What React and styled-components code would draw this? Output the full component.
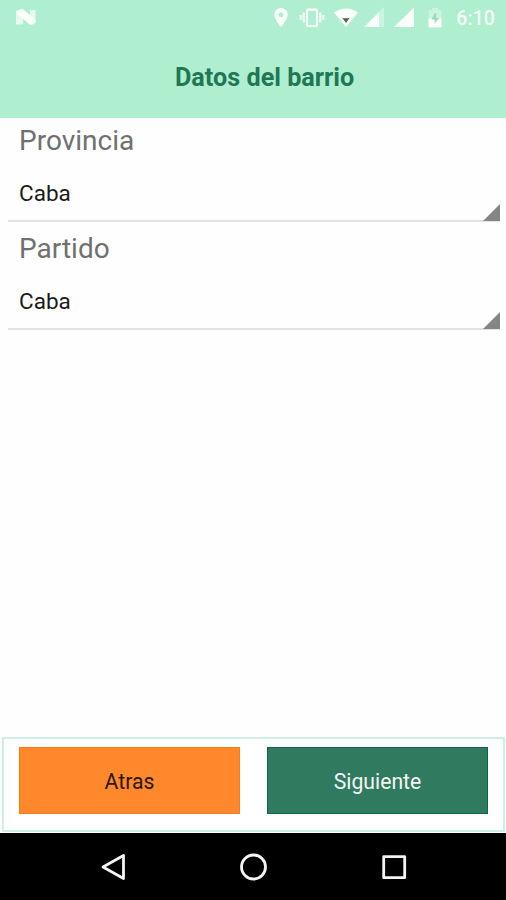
import React from 'react';
import styled, { createGlobalStyle } from 'styled-components';

const GlobalStyle = createGlobalStyle`
  * { box-sizing: border-box; }
  body { margin: 0; background: #fff; }
`;

const Screen = styled.div`
  width: 506px;
  height: 900px;
  display: flex;
  flex-direction: column;
  overflow: hidden;
  background: #fefefe;
  font-family: Roboto, sans-serif;
`;

const Header = styled.header`
  height: 118px;
  flex: none;
  background: #b0eed0;
`;

const StatusBar = styled.div`
  height: 36px;
  display: flex;
  align-items: flex-start;
  padding: 0 11px 0 16px;
`;

const StatusIcon = styled.svg`
  display: block;
  flex: none;
  height: 36px;
  width: ${(p) => p.$width}px;
  margin-left: ${(p) => p.$gap || 0}px;
  fill: #fafffc;
`;

const Clock = styled.time`
  margin-left: auto;
  line-height: 37px;
  font-size: 19.5px;
  font-weight: 500;
  letter-spacing: 0.1px;
  color: #f4fff9;
`;

const Title = styled.h1`
  margin: 0;
  padding: 24px 0 0 175px;
  font-size: 25.2px;
  line-height: 36px;
  font-weight: 700;
  color: #1e7855;
`;

const Form = styled.main`
  flex: 1;
  padding: 0 6px 0 8px;
`;

const Field = styled.section`
  height: 108px;
`;

const Label = styled.div`
  height: 44px;
  padding-left: 11px;
  font-size: 28px;
  line-height: 45px;
  color: #707070;
`;

const Select = styled.div`
  height: 60px;
  display: flex;
  justify-content: space-between;
  align-items: flex-end;
  padding-left: 11px;
  border-bottom: 2px solid #e2e2e2;
`;

const Value = styled.span`
  font-size: 22.5px;
  line-height: 54px;
  color: #1b1b1b;
`;

const Arrow = styled.svg`
  display: block;
  width: 17px;
  height: 17px;
  margin-bottom: -1px;
  fill: #858585;
`;

const Actions = styled.footer`
  flex: none;
  height: 95px;
  margin: 0 1px 1px 2px;
  padding: 8px 14px 0 15px;
  display: flex;
  gap: 27px;
  border: 2px solid #cdf0e2;
  background: #fff;
`;

const Button = styled.button`
  width: 221px;
  height: 67px;
  padding: 2px 0 0;
  border: 1px solid ${(p) => (p.$primary ? '#0c6745' : '#fa7918')};
  background: ${(p) => (p.$primary ? '#307a60' : '#ff882c')};
  color: ${(p) => (p.$primary ? '#f2f7f5' : '#2c1705')};
  font-family: inherit;
  font-size: 21.2px;
`;

const NavBar = styled.nav`
  flex: none;
  height: 67px;
  padding: 0 98px 0 100px;
  display: flex;
  align-items: center;
  justify-content: space-between;
  background: #000;
`;

const NavIcon = styled.svg`
  display: block;
  width: 28px;
  height: 30px;
  fill: none;
  stroke: #f4f4f4;
  stroke-width: 2.8;
  stroke-linejoin: round;
`;

function SelectField({ label, value }) {
  return (
    <Field>
      <Label>{label}</Label>
      <Select>
        <Value>{value}</Value>
        <Arrow viewBox="0 0 17 17"><path d="M17 0V17H0Z" /></Arrow>
      </Select>
    </Field>
  );
}

export default function App() {
  return (
    <Screen>
      <GlobalStyle />
      <Header>
        <StatusBar>
          <StatusIcon $width={20} viewBox="0 0 20 36">
            <path opacity=".72" d="M0 11l5-1.500 2 6V24.500H0zM14 10h5.500v13l-2 1-3.500-4z" />
            <path d="M.5 11L4 9.300Q6 8.500 8 10L19.500 20v3l-4 2q-1.500 0-3-1.500L.5 13z" />
          </StatusIcon>
          <StatusIcon $width={14} $gap={238} viewBox="0 0 14 36">
            <path fillRule="evenodd" d="M7 8C3 8 .3 11 .3 14.800C.3 19.500 7 27 7 27s6.700-7.500 6.700-12.200C13.700 11 11 8 7 8zm0 4.300a2.500 2.500 0 1 1 0 5 2.500 2.500 0 0 1 0-5z" />
          </StatusIcon>
          <StatusIcon $width={26} $gap={11} viewBox="0 0 26 36">
            <path fillRule="evenodd" d="M8.500 8.500h9q1.500 0 1.500 1.500v15.500q0 1.500-1.500 1.500h-9Q7 27 7 25.500V10q0-1.500 1.500-1.500zM9 11v14h8V11z" />
            <path opacity=".75" d="M3.500 12.500h2.500v10h-2.500zM.5 15h2.300v5h-2.300zM20 12.500h2.500v10h-2.500zM23.200 15h2.300v5h-2.300z" />
          </StatusIcon>
          <StatusIcon $width={24} $gap={9} viewBox="0 0 24 36">
            <path d="M0 12.500Q12 4.500 24 12.500L12 27z" />
            <path fill="#555f59" d="M8.300 17.700q3.700 1.300 7.400 0L12 23z" />
          </StatusIcon>
          <StatusIcon $width={20} $gap={6} viewBox="0 0 20 36">
            <path opacity=".35" d="M15 12l5-5v20h-5z" />
            <path d="M15 12v15H0z" />
          </StatusIcon>
          <StatusIcon $width={20} $gap={10} viewBox="0 0 20 36">
            <path d="M20 7.500V27H0z" />
          </StatusIcon>
          <StatusIcon $width={14} $gap={14} viewBox="0 0 14 36">
            <path opacity=".35" d="M4 8h6v2h3.500v9H.5v-9H4z" />
            <path d="M.5 18.500h13v9H.5z" />
            <path fill="#9dd9bd" d="M6.800 13h1.400v5h3l-5 6 .8-4.500H3.500z" />
          </StatusIcon>
          <Clock>6:10</Clock>
        </StatusBar>
        <Title>Datos del barrio</Title>
      </Header>
      <Form>
        <SelectField label="Provincia" value="Caba" />
        <SelectField label="Partido" value="Caba" />
      </Form>
      <Actions>
        <Button>Atras</Button>
        <Button $primary>Siguiente</Button>
      </Actions>
      <NavBar>
        <NavIcon viewBox="0 0 28 30"><path d="M3 15L23.500 3.500v23z" /></NavIcon>
        <NavIcon viewBox="0 0 28 30"><circle cx="13.500" cy="15" r="12" /></NavIcon>
        <NavIcon viewBox="0 0 28 30"><rect x="3.700" y="4.700" width="21" height="21" /></NavIcon>
      </NavBar>
    </Screen>
  );
}
